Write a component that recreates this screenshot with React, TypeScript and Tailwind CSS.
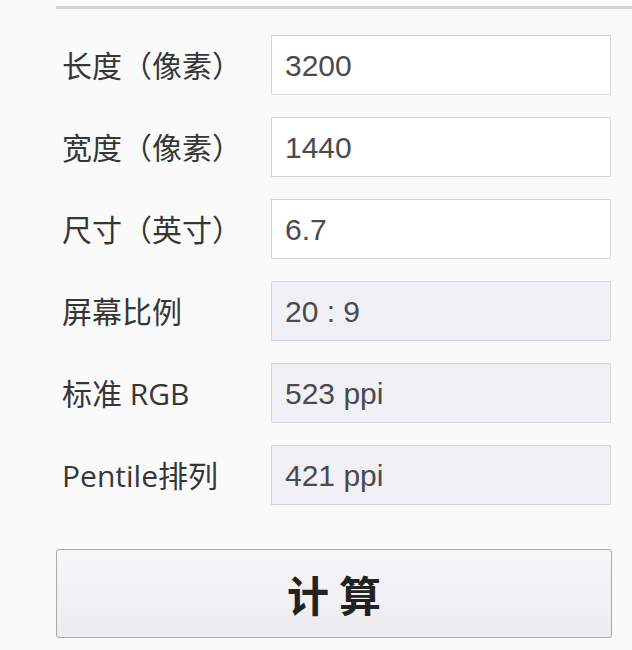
import React from 'react';

const rows = [
  { label: '长度（像素）', value: '3200', readOnly: false },
  { label: '宽度（像素）', value: '1440', readOnly: false },
  { label: '尺寸（英寸）', value: '6.7', readOnly: false },
  { label: '屏幕比例', value: '20 : 9', readOnly: true },
  { label: '标准 RGB', value: '523 ppi', readOnly: true },
  { label: 'Pentile排列', value: '421 ppi', readOnly: true },
];

const App: React.FC = () => {
  return (
    <div className="w-[632px] h-[650px] overflow-hidden bg-[#fafafb] pt-[6px]">
      <div className="ml-[56px] h-[3px] bg-[#d3d5d9]" />

      <div className="mt-[26px] pl-[62px] grid grid-cols-[209px_340px] gap-y-[22px]">
        {rows.map(row => (
          <React.Fragment key={row.label}>
            <div
              className="flex items-center h-[60px] text-[30px] text-[#363636]"
              style={{ fontFamily: '"Open Sans", "Noto Sans CJK SC", sans-serif' }}
            >
              {row.label}
            </div>
            <div
              className={`flex items-center h-[60px] px-[13px] border border-[#d6d6da] text-[30px] text-[#4a4a4f] ${row.readOnly ? 'bg-[#f1f1f5]' : 'bg-white'}`}
              style={{ fontFamily: '"Liberation Sans", Arial, sans-serif' }}
            >
              {row.value}
            </div>
          </React.Fragment>
        ))}
      </div>

      <button
        className="mt-[44px] ml-[56px] w-[556px] h-[89px] rounded-[3px] border border-[#a9a9ad] bg-gradient-to-b from-[#f7f7f9] to-[#ececef] text-[42px] font-bold text-[#222] tracking-[10px] pl-[10px]"
        style={{ fontFamily: '"Noto Sans CJK SC", sans-serif' }}
      >
        计算
      </button>
    </div>
  );
};

export default App;
